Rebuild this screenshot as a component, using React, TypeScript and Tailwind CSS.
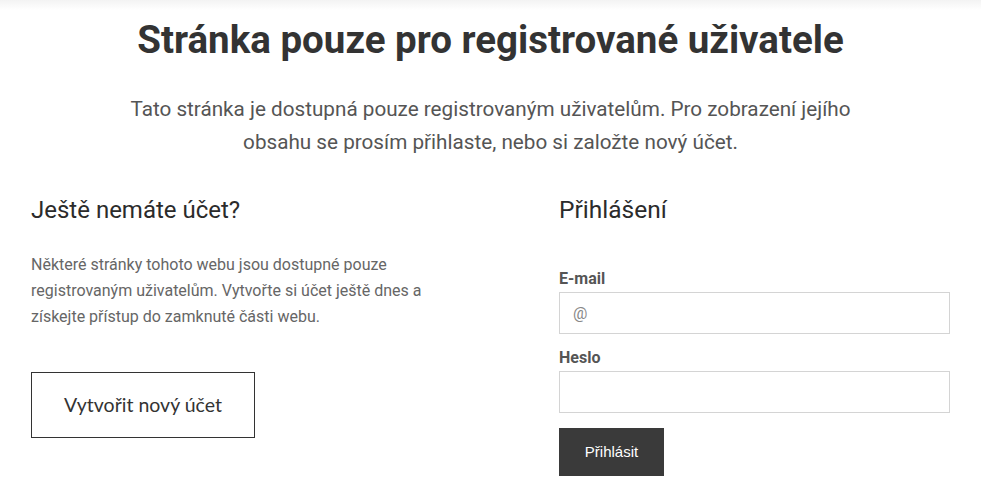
export default function App() {
  return (
    <div className="min-h-[486px] bg-white text-[#333] font-['Roboto',sans-serif]">
      {/* header shadow strip */}
      <div className="h-[10px] bg-gradient-to-b from-[#f3f3f3] to-white" />

      <div className="mx-auto w-[919px]">
        <h1 className="mt-[6px] text-center text-[38.5px] font-bold leading-[48px] text-[#333]">
          Stránka pouze pro registrované uživatele
        </h1>
        <p className="mx-auto mt-[29px] w-[760px] text-center text-[20.7px] leading-[33px] text-[#555]">
          Tato stránka je dostupná pouze registrovaným uživatelům. Pro zobrazení jejího obsahu se prosím přihlaste, nebo si založte nový účet.
        </p>

        <div className="mt-[35px] flex">
          <div className="w-[528px]">
            <h2 className="text-[24px] leading-[32px] text-[#2b2b2b]">Ještě nemáte účet?</h2>
            <p className="mt-[26px] w-[410px] text-[16px] leading-[26px] text-[#666]">
              Některé stránky tohoto webu jsou dostupné pouze registrovaným uživatelům. Vytvořte si účet ještě dnes a získejte přístup do zamknuté části webu.
            </p>
            <button className="mt-[42px] h-[66px] w-[224px] border border-[#333] bg-white text-[19.5px] text-[#333] font-['Lato',sans-serif]">
              Vytvořit nový účet
            </button>
          </div>

          <div className="flex-1">
            <h2 className="text-[24.5px] leading-[32px] text-[#2b2b2b]">Přihlášení</h2>
            <form className="mt-[42px] flex flex-col" onSubmit={(e) => e.preventDefault()}>
              <label className="text-[16px] font-bold leading-[22px] text-[#555]">E-mail</label>
              <input
                type="email"
                placeholder="@"
                className="mt-[2px] h-[42px] w-full border border-[#d4d4d4] px-[13px] text-[16px] text-[#333] placeholder:text-[#888] outline-none"
              />
              <label className="mt-[13px] text-[16px] font-bold leading-[22px] text-[#555]">Heslo</label>
              <input
                type="password"
                className="mt-[2px] h-[42px] w-full border border-[#d4d4d4] px-[13px] text-[16px] outline-none"
              />
              <button
                type="submit"
                className="mt-[15px] h-[48px] w-[105px] bg-[#3a3a3a] text-[15px] text-white font-['Liberation_Sans',sans-serif]"
              >
                Přihlásit
              </button>
            </form>
          </div>
        </div>
      </div>
    </div>
  );
}
